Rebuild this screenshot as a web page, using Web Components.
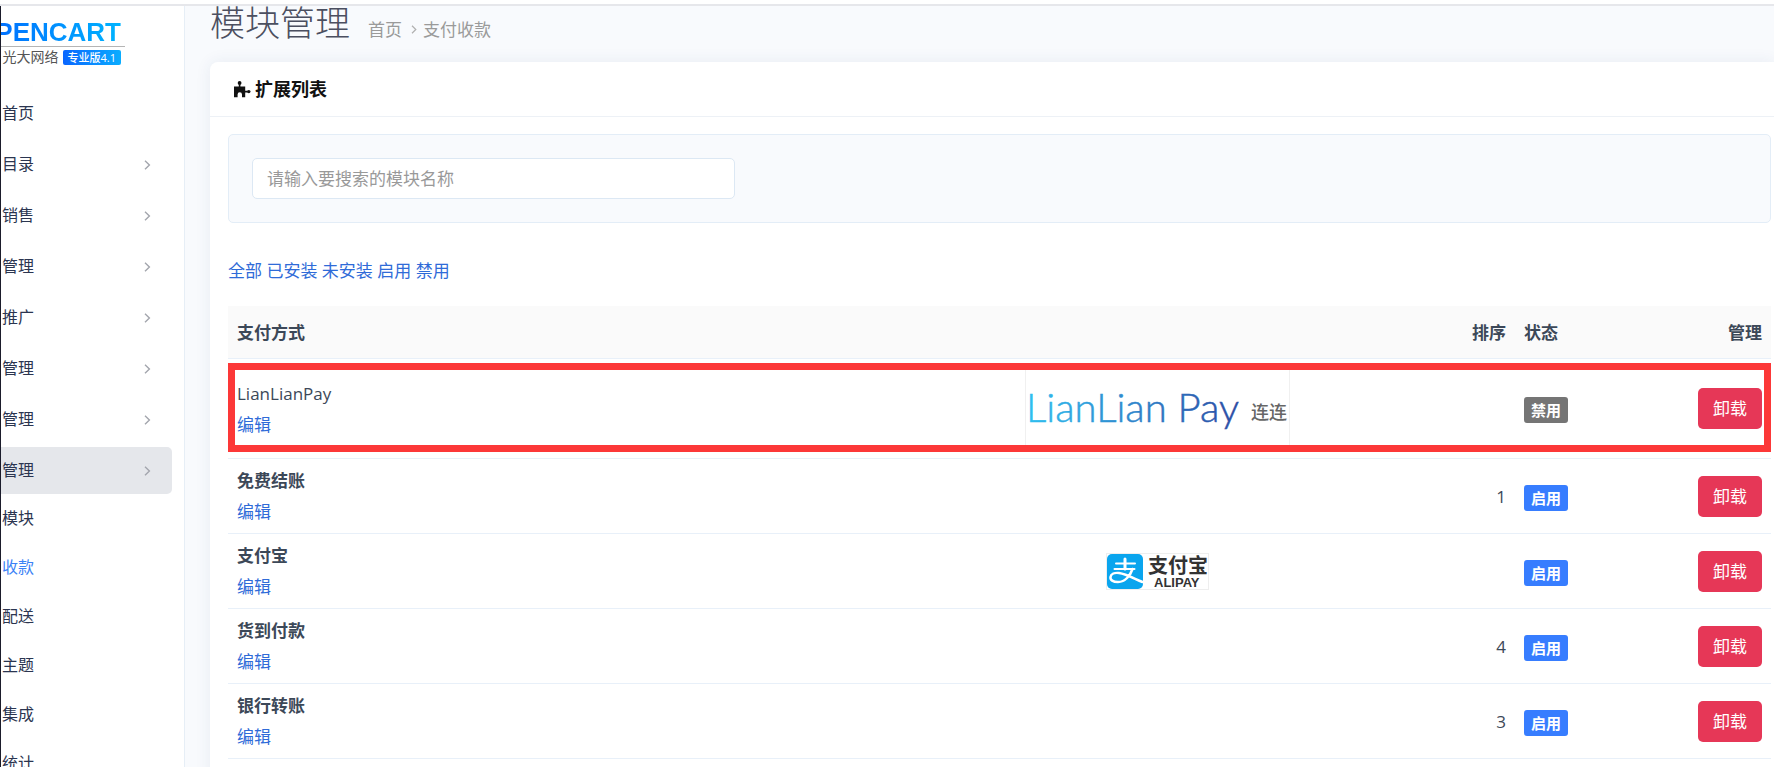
<!DOCTYPE html>
<html lang="zh-CN">
<head>
<meta charset="utf-8">
<title>模块管理</title>
<style>
html, body {
  height: 100%;
}
body {
  margin: 0;
  overflow: hidden;
  background: #f8fafd;
  color: #3c4858;
  font: 17px/31px "Open Sans", "Noto Sans CJK SC", sans-serif;
}
</style>
</head>
<body>
<admin-shell>
  <side-nav slot="nav">
    <brand-logo slot="brand"></brand-logo>
    <nav-item>首页</nav-item>
    <nav-item arrow>目录</nav-item>
    <nav-item arrow>销售</nav-item>
    <nav-item arrow>管理</nav-item>
    <nav-item arrow>推广</nav-item>
    <nav-item arrow>管理</nav-item>
    <nav-item arrow>管理</nav-item>
    <nav-item arrow active>管理</nav-item>
    <nav-item sub>模块</nav-item>
    <nav-item sub current>收款</nav-item>
    <nav-item sub>配送</nav-item>
    <nav-item sub>主题</nav-item>
    <nav-item sub>集成</nav-item>
    <nav-item sub>统计</nav-item>
  </side-nav>
  <page-title>模块管理</page-title>
  <extension-card>
    <span slot="title">扩展列表</span>
    <search-panel></search-panel>
    <filter-links></filter-links>
    <payment-table></payment-table>
  </extension-card>
</admin-shell>

<script>
// Shared base: each element only supplies its own markup and styles.
class BaseElement extends HTMLElement {
  constructor() {
    super();
    this.attachShadow({mode: "open"});
    const template = document.createElement("template");
    template.innerHTML = this.constructor.markup;
    this.shadowRoot.appendChild(template.content.cloneNode(true));
  }
}

class AdminShell extends BaseElement {
  static markup = `
<style>
:host {
  display: flex;
  flex-direction: column;
  min-height: 100%;
}
header {
  height: 4px;
  background: #fff;
  border-bottom: 2px solid #e6e7eb;
}
.body {
  display: flex;
  flex: 1;
  border-left: 1px solid #1b1c2b;
}
main {
  flex: 1;
  min-width: 0;
  padding-left: 25px;
}
</style>
<header></header>
<div class="body">
  <slot name="nav"></slot>
  <main><slot></slot></main>
</div>`;
}

class SideNav extends BaseElement {
  static markup = `
<style>
:host {
  box-sizing: border-box;
  display: block;
  flex: 0 0 184px;
  background: #fff;
  border-right: 1px solid #e6eef6;
  overflow: hidden;
}
nav {
  padding-right: 12px;
}
</style>
<slot name="brand"></slot>
<nav><slot></slot></nav>`;
}

class BrandLogo extends BaseElement {
  static markup = `
<style>
:host {
  display: flex;
  flex-direction: column;
  width: 124px;
  height: 70px;
  padding-top: 14px;
}
.name {
  display: flex;
  justify-content: flex-end;
  padding-right: 4px;
  font: bold 26px/24px "Liberation Sans", sans-serif;
}
.name span {
  color: transparent;
  background: linear-gradient(90deg, #006eff, #00b4ff);
  background-clip: text;
}
.edition {
  display: flex;
  align-items: center;
  justify-content: flex-end;
  gap: 4px;
  margin-top: 2px;
  padding: 2px 4px 0 0;
  border-top: 1px solid #b5b5b5;
  color: #555;
  font-size: 14px;
  line-height: 16px;
  white-space: nowrap;
}
.edition b {
  padding: 0 5px;
  border-radius: 2px;
  color: #fff;
  background: linear-gradient(90deg, #0a66ff, #0aadff);
  font-size: 11px;
  font-weight: 500;
  line-height: 15px;
}
</style>
<div class="name"><span>PENCART</span></div>
<div class="edition"><span>光大网络</span><b>专业版4.1</b></div>`;
}

class NavItem extends BaseElement {
  static markup = `
<style>
:host {
  display: block;
  margin-bottom: 4px;
}
a {
  display: flex;
  align-items: center;
  justify-content: space-between;
  height: 47px;
  padding: 0 21px 0 1px;
  border-radius: 0 5px 5px 0;
  color: #2b3550;
  font-size: 16px;
  text-decoration: none;
}
svg {
  display: none;
}
:host([arrow]) svg {
  display: block;
}
:host([active]) {
  margin-bottom: 0;
}
:host([active]) a {
  background: #e5e7eb;
}
:host([sub]) {
  margin-bottom: 0;
}
:host([sub]) a {
  height: 49px;
}
:host([current]) a {
  color: #3b82f6;
}
</style>
<a href="#"><slot></slot>
<svg width="7" height="10" viewBox="0 0 7 10" fill="none" stroke="#a3a6ad" stroke-width="1.4"><path d="M1 .8 5.400 5 1 9.200"/></svg></a>`;
}

class PageTitle extends BaseElement {
  static markup = `
<style>
:host {
  display: flex;
  align-items: flex-end;
  gap: 18px;
  height: 56px;
}
h1 {
  margin: 0;
  padding-bottom: 20px;
  color: #4b4f60;
  font-size: 35px;
  font-weight: 300;
  line-height: 38px;
}
nav {
  display: flex;
  align-items: center;
  gap: 9px;
  padding-bottom: 17px;
  color: #9a9a9a;
}
a {
  color: inherit;
  text-decoration: none;
}
.crumbs {
  display: flex;
  align-items: center;
  gap: 6px;
}
</style>
<h1><slot></slot></h1>
<nav>
  <a href="#">首页</a>
  <span class="crumbs">
    <svg width="6" height="9" viewBox="0 0 6 9" fill="none" stroke="#b0b0b0" stroke-width="1.2"><path d="M1 .8 4.8 4.5 1 8.2"/></svg>
    <a href="#">支付收款</a>
  </span>
</nav>`;
}

class ExtensionCard extends BaseElement {
  static markup = `
<style>
:host {
  display: block;
  min-height: 720px;
  background: #fff;
  border-radius: 8px 0 0 0;
  box-shadow: 0 0 16px rgba(40, 70, 120, .08);
}
h2 {
  display: flex;
  align-items: center;
  gap: 4px;
  height: 54px;
  margin: 0;
  padding-left: 23px;
  border-bottom: 1px solid #edf1f6;
  color: #111;
  font-size: 18px;
  font-weight: 700;
}
.content {
  padding: 17px 3px 0 18px;
}
</style>
<h2>
  <svg width="18" height="18" viewBox="0 0 18 18" fill="#111">
    <path d="M1 6.500h4.800V4.300h1.600v2.200h4.800v4.300h2.600v1.600h-2.600v4.800H9v-2.700a2.200 2.200 0 0 0-4.400 0v2.700H1z"/>
    <circle cx="6.600" cy="3" r="1.900"/>
    <circle cx="15.800" cy="11.600" r="1.700"/>
  </svg>
  <slot name="title"></slot>
</h2>
<div class="content"><slot></slot></div>`;
}

class SearchPanel extends BaseElement {
  static markup = `
<style>
:host {
  display: block;
  padding: 23px;
  background: #f8fafd;
  border: 1px solid #e3edf7;
  border-radius: 5px;
}
input {
  box-sizing: border-box;
  display: block;
  width: 100%;
  max-width: 483px;
  height: 41px;
  padding: 0 14px;
  background: #fff;
  border: 1px solid #dce8f4;
  border-radius: 5px;
  color: inherit;
  font: inherit;
}
input::placeholder {
  color: #999;
}
</style>
<input type="text" aria-label="模块名称" placeholder="请输入要搜索的模块名称">`;
}

class FilterLinks extends BaseElement {
  static markup = `
<style>
:host {
  display: block;
  padding: 32px 0 20px;
}
a {
  color: #2f6bd8;
  text-decoration: none;
}
</style>
<a href="#">全部</a> <a href="#">已安装</a> <a href="#">未安装</a> <a href="#">启用</a> <a href="#">禁用</a>`;
}

class LianlianLogo extends BaseElement {
  static markup = `
<style>
:host {
  box-sizing: border-box;
  display: inline-block;
  width: 265px;
  height: 83px;
  border: 1px solid #f0f0f0;
  vertical-align: middle;
}
.wordmark {
  font: 300 40px Lato, sans-serif;
}
.cjk {
  font: 500 18px "Noto Sans CJK SC", sans-serif;
}
</style>
<svg width="263" height="81" viewBox="0 0 263 81">
  <defs>
    <linearGradient id="ink">
      <stop offset="0" stop-color="#2fc0f0"/>
      <stop offset=".5" stop-color="#2f86cc"/>
      <stop offset="1" stop-color="#2a4ba3"/>
    </linearGradient>
  </defs>
  <text class="wordmark" x="0" y="54" fill="url(#ink)" stroke="url(#ink)" stroke-width=".5">LianLian Pay</text>
  <text class="cjk" x="225" y="51" fill="#666">连连</text>
</svg>`;
}

class AlipayLogo extends BaseElement {
  static markup = `
<style>
:host {
  box-sizing: border-box;
  display: inline-block;
  width: 103px;
  height: 37px;
  border: 1px solid #eee;
  vertical-align: middle;
}
svg {
  display: block;
}
.cjk {
  font: 700 20px "Noto Sans CJK SC", sans-serif;
}
.latin {
  font: bold 13px "Liberation Sans", sans-serif;
}
</style>
<svg width="101" height="35" viewBox="0 0 101 35">
  <rect width="36" height="35" rx="5" fill="#0aa5ee"/>
  <g fill="none" stroke="#fff" stroke-linecap="round">
    <path stroke-width="2" d="M9 9.5h19M7.500 15h20"/>
    <path stroke-width="3" d="M18 5v10"/>
    <path stroke-width="2.500" d="M25.500 15c-2 6-7 13-14.500 13-5 0-8-2-7.500-5s4-4.500 8.500-4c7 1 14 5 23.500 9"/>
  </g>
  <text class="cjk" x="41" y="19" fill="#333">支付宝</text>
  <text class="latin" x="47" y="33" fill="#333">ALIPAY</text>
</svg>`;
}

class StatusBadge extends BaseElement {
  static markup = `
<style>
:host {
  display: inline-block;
  padding: 0 7px;
  border-radius: 3px;
  background: #377dff;
  color: #fff;
  font-size: 15px;
  font-weight: 700;
  line-height: 26px;
  vertical-align: middle;
}
:host([off]) {
  background: #757575;
}
</style>
<slot></slot>`;
}

const rows = [
  {name: "LianLianPay", logo: "<lianlian-logo></lianlian-logo>", sort: "", enabled: false, marked: true},
  {name: "免费结账", logo: "", sort: "1", enabled: true},
  {name: "支付宝", logo: "<alipay-logo></alipay-logo>", sort: "", enabled: true},
  {name: "货到付款", logo: "", sort: "4", enabled: true},
  {name: "银行转账", logo: "", sort: "3", enabled: true},
];

class PaymentTable extends BaseElement {
  static markup = `
<style>
:host {
  display: block;
}
table {
  width: 100%;
  border-collapse: separate;
  border-spacing: 0;
  table-layout: fixed;
}
th, td {
  padding: 6px 9px;
  border-bottom: 1px solid #e8f0f9;
  text-align: left;
}
th {
  padding: 11px 9px 10px;
  background: #fafafa;
}
.logo {
  width: 35%;
  box-sizing: border-box;
  padding: 0;
  text-align: center;
}
.sort {
  width: 69px;
  text-align: right;
}
.status {
  width: 100px;
}
.action {
  width: 120px;
  text-align: right;
}
td a {
  color: #2f6bd8;
  text-decoration: none;
}
.name {
  font-weight: 700;
}
.marked {
  position: relative;
}
.marked td {
  height: 87px;
}
.marked .name {
  font-weight: 400;
}
/* Frame drawn over the whole row, not only its first cell */
.marked td:first-child::after {
  content: "";
  position: absolute;
  inset: 4px 0 7px;
  border: 7px solid #fc3838;
  pointer-events: none;
}
button {
  height: 41px;
  padding: 0 15px;
  border: 0;
  border-radius: 5px;
  background: #e63757;
  color: #fff;
  font: inherit;
  vertical-align: middle;
}
</style>
<table>
  <thead>
    <tr><th>支付方式</th><th class="logo"></th><th class="sort">排序</th><th class="status">状态</th><th class="action">管理</th></tr>
  </thead>
  <tbody></tbody>
</table>`;

  connectedCallback() {
    this.shadowRoot.querySelector("tbody").innerHTML = rows.map(row => `
<tr class="${row.marked ? "marked" : ""}">
  <td><div class="name">${row.name}</div><a href="#">编辑</a></td>
  <td class="logo">${row.logo}</td>
  <td class="sort">${row.sort}</td>
  <td class="status"><status-badge ${row.enabled ? "" : "off"}>${row.enabled ? "启用" : "禁用"}</status-badge></td>
  <td class="action"><button type="button">卸载</button></td>
</tr>`).join("");
  }
}

customElements.define("admin-shell", AdminShell);
customElements.define("side-nav", SideNav);
customElements.define("brand-logo", BrandLogo);
customElements.define("nav-item", NavItem);
customElements.define("page-title", PageTitle);
customElements.define("extension-card", ExtensionCard);
customElements.define("search-panel", SearchPanel);
customElements.define("filter-links", FilterLinks);
customElements.define("lianlian-logo", LianlianLogo);
customElements.define("alipay-logo", AlipayLogo);
customElements.define("status-badge", StatusBadge);
customElements.define("payment-table", PaymentTable);
</script>
</body>
</html>
